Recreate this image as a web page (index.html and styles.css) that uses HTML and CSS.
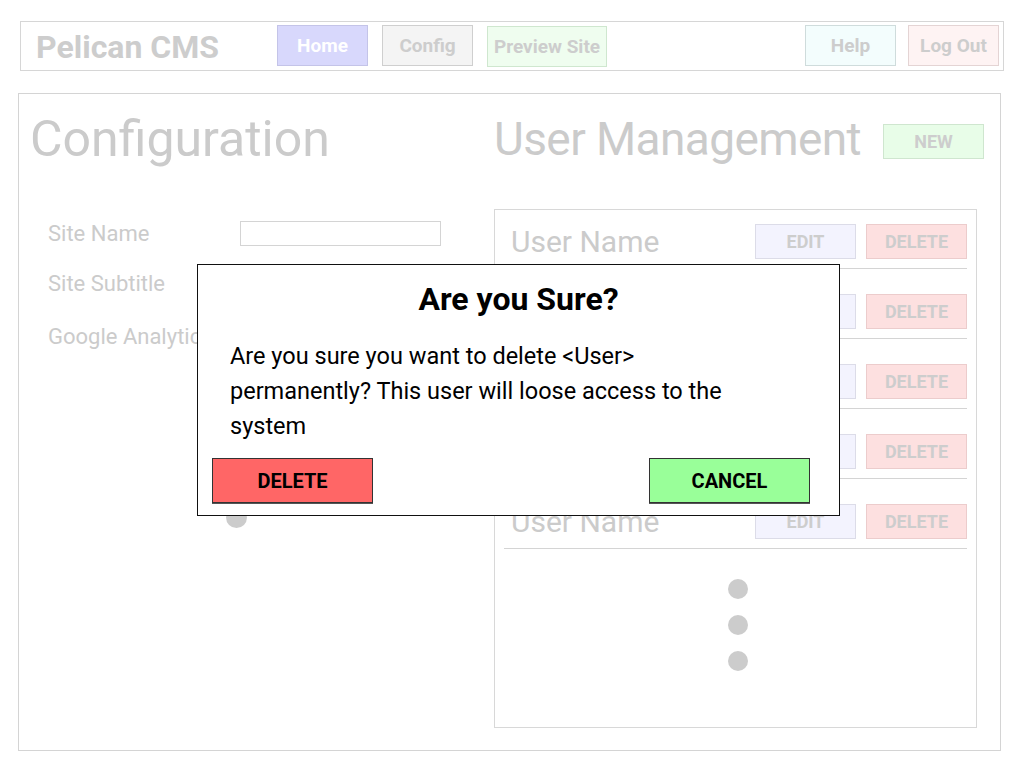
FILE: index.html
```html
<!DOCTYPE html>
<html lang="en">
<head>
<meta charset="utf-8">
<title>Pelican CMS</title>
<link rel="stylesheet" href="styles.css">
</head>
<body>
<header class="topbar">
  <div class="brand">Pelican CMS</div>
  <nav class="nav">
    <span class="nbtn home">Home</span>
    <span class="nbtn cfgbtn">Config</span>
    <span class="nbtn preview">Preview Site</span>
  </nav>
  <nav class="nav nav-right">
    <span class="nbtn help">Help</span>
    <span class="nbtn logout">Log Out</span>
  </nav>
</header>

<main class="panel">
  <section class="cfg">
    <h1 class="title">Configuration</h1>
    <div class="form">
      <div class="frow"><span class="label">Site Name</span><span class="input"></span></div>
      <div class="frow"><span class="label">Site Subtitle</span></div>
      <div class="frow"><span class="label">Google Analytics</span></div>
    </div>
    <span class="radio"></span>
  </section>

  <section class="users">
    <div class="uhead">
      <h1 class="title utitle">User Management</h1>
      <span class="sbtn new">NEW</span>
    </div>
    <div class="ulist">
      <div class="urow"><span class="uname">User Name</span><span class="sbtn edit">EDIT</span><span class="sbtn del">DELETE</span></div>
      <div class="urow"><span class="uname">User Name</span><span class="sbtn edit">EDIT</span><span class="sbtn del">DELETE</span></div>
      <div class="urow"><span class="uname">User Name</span><span class="sbtn edit">EDIT</span><span class="sbtn del">DELETE</span></div>
      <div class="urow"><span class="uname">User Name</span><span class="sbtn edit">EDIT</span><span class="sbtn del">DELETE</span></div>
      <div class="urow"><span class="uname">User Name</span><span class="sbtn edit">EDIT</span><span class="sbtn del">DELETE</span></div>
      <div class="dots"><span></span><span></span><span></span></div>
    </div>
  </section>

  <div class="dialog">
    <h2 class="dtitle">Are you Sure?</h2>
    <p class="dtext">Are you sure you want to delete &lt;User&gt; permanently? This user will loose access to the system</p>
    <div class="dactions">
      <span class="dbtn ddelete">DELETE</span>
      <span class="dbtn dcancel">CANCEL</span>
    </div>
  </div>
</main>
</body>
</html>
```

FILE: styles.css
```css
* { box-sizing: border-box; }
html, body { margin: 0; padding: 0; background: #fff; }
body {
  font-family: Roboto, "Noto Sans", "Liberation Sans", sans-serif;
  color: #cbcbcb;
  width: 1024px;
  height: 768px;
  overflow: hidden;
}

/* top bar */
.topbar {
  display: flex;
  align-items: flex-start;
  margin: 21px 0 0 20px;
  width: 984px;
  height: 50px;
  border: 1px solid #d6d6d6;
  padding-top: 3px;
}
.brand {
  flex: 0 0 256px;
  padding-left: 15px;
  font-size: 32px;
  font-weight: 700;
  line-height: 44px;
  color: #cdcdcd;
  white-space: nowrap;
}
.nav { display: flex; gap: 14px; flex-shrink: 0; }
.nav-right { margin-left: auto; gap: 12px; margin-right: 4px; }
.nbtn {
  display: flex;
  align-items: center;
  justify-content: center;
  flex: 0 0 91px;
  height: 41px;
  font-size: 19px;
  font-weight: 700;
  color: #cdcdcd;
  border: 1px solid #cfcfcf;
  white-space: nowrap;
}
.home { background: #d8d8fc; border-color: #c4c4e8; color: #fff; }
.cfgbtn { background: #f4f4f4; }
.preview { flex-basis: 120px; background: #effdef; border-color: #cfe7cf; margin-top: 1px; }
.help { background: #f3fdfd; border-color: #cfdcdc; }
.logout { background: #fef3f3; border-color: #e4d4d4; }

/* main panel */
.panel {
  position: relative;
  display: flex;
  margin: 22px 0 0 18px;
  width: 983px;
  height: 658px;
  border: 1px solid #d4d4d4;
}
.title {
  margin: 0;
  font-size: 50px;
  font-weight: 400;
  line-height: 46px;
  color: #cbcbcb;
  white-space: nowrap;
}
.cfg {
  position: relative;
  flex: 0 0 475px;
  min-width: 0;
  padding: 22px 0 0 11px;
}
.form { margin-top: 59px; padding-left: 18px; }
.frow {
  display: flex;
  align-items: center;
  height: 25px;
  font-size: 22px;
}
.frow + .frow { margin-top: 25px; }
.frow:nth-child(3) { margin-top: 28px; }
.label { width: 192px; white-space: nowrap; }
.input {
  width: 201px;
  height: 25px;
  border: 1px solid #d4d4d4;
}
.radio {
  position: absolute;
  left: 207px;
  top: 413px;
  width: 21px;
  height: 21px;
  border-radius: 50%;
  background: #cccccc;
}

/* users */
.users { flex: 0 0 483px; width: 483px; min-width: 0; padding-top: 22px; }
.uhead { display: flex; align-items: center; }
.utitle { flex: 0 0 389px; font-size: 46px; letter-spacing: -0.6px; }
.sbtn {
  display: flex;
  align-items: center;
  justify-content: center;
  flex: 0 0 101px;
  height: 35px;
  font-size: 18px;
  font-weight: 700;
  color: #cdcdcd;
  border: 1px solid #d6d6d6;
}
.new { background: #e8fde8; border-color: #cfe6cf; margin-top: 4px; }
.edit { background: #f3f3fe; border-color: #dcdce8; }
.del { background: #fde0e0; border-color: #eccccc; margin-left: 10px; }

.ulist {
  margin-top: 47px;
  width: 483px;
  height: 519px;
  border: 1px solid #d8d8d8;
  padding: 0 9px;
}
.urow {
  display: flex;
  align-items: center;
  padding: 25px 0 9px;
  border-bottom: 1px solid #d4d4d4;
}
.urow:first-child { padding-top: 14px; }
.uname {
  flex: 1;
  min-width: 0;
  padding-left: 7px;
  font-size: 30px;
  color: #cbcbcb;
  white-space: nowrap;
}
.dots {
  display: flex;
  flex-direction: column;
  align-items: center;
  gap: 16px;
  padding: 30px 0 0 4px;
}
.dots span {
  width: 20px;
  height: 20px;
  border-radius: 50%;
  background: #cccccc;
}

/* dialog */
.dialog {
  position: absolute;
  left: 178px;
  top: 170px;
  width: 643px;
  height: 252px;
  background: #fff;
  border: 1px solid #111;
  color: #000;
}
.dtitle {
  margin: 16px 0 0;
  text-align: center;
  font-size: 32px;
  font-weight: 700;
  line-height: 36px;
}
.dtext {
  margin: 22px 0 0;
  padding: 0 70px 0 32px;
  font-size: 23.5px;
  line-height: 35px;
}
.dactions {
  display: flex;
  justify-content: space-between;
  margin-top: 14px;
  padding: 0 29px 0 14px;
}
.dbtn {
  display: flex;
  align-items: center;
  justify-content: center;
  width: 161px;
  height: 45px;
  font-size: 20px;
  font-weight: 700;
  color: #000;
  border: 1px solid #333;
  box-shadow: 0 1px 0 #555;
}
.ddelete { background: #ff6666; }
.dcancel { background: #99ff99; }
```
